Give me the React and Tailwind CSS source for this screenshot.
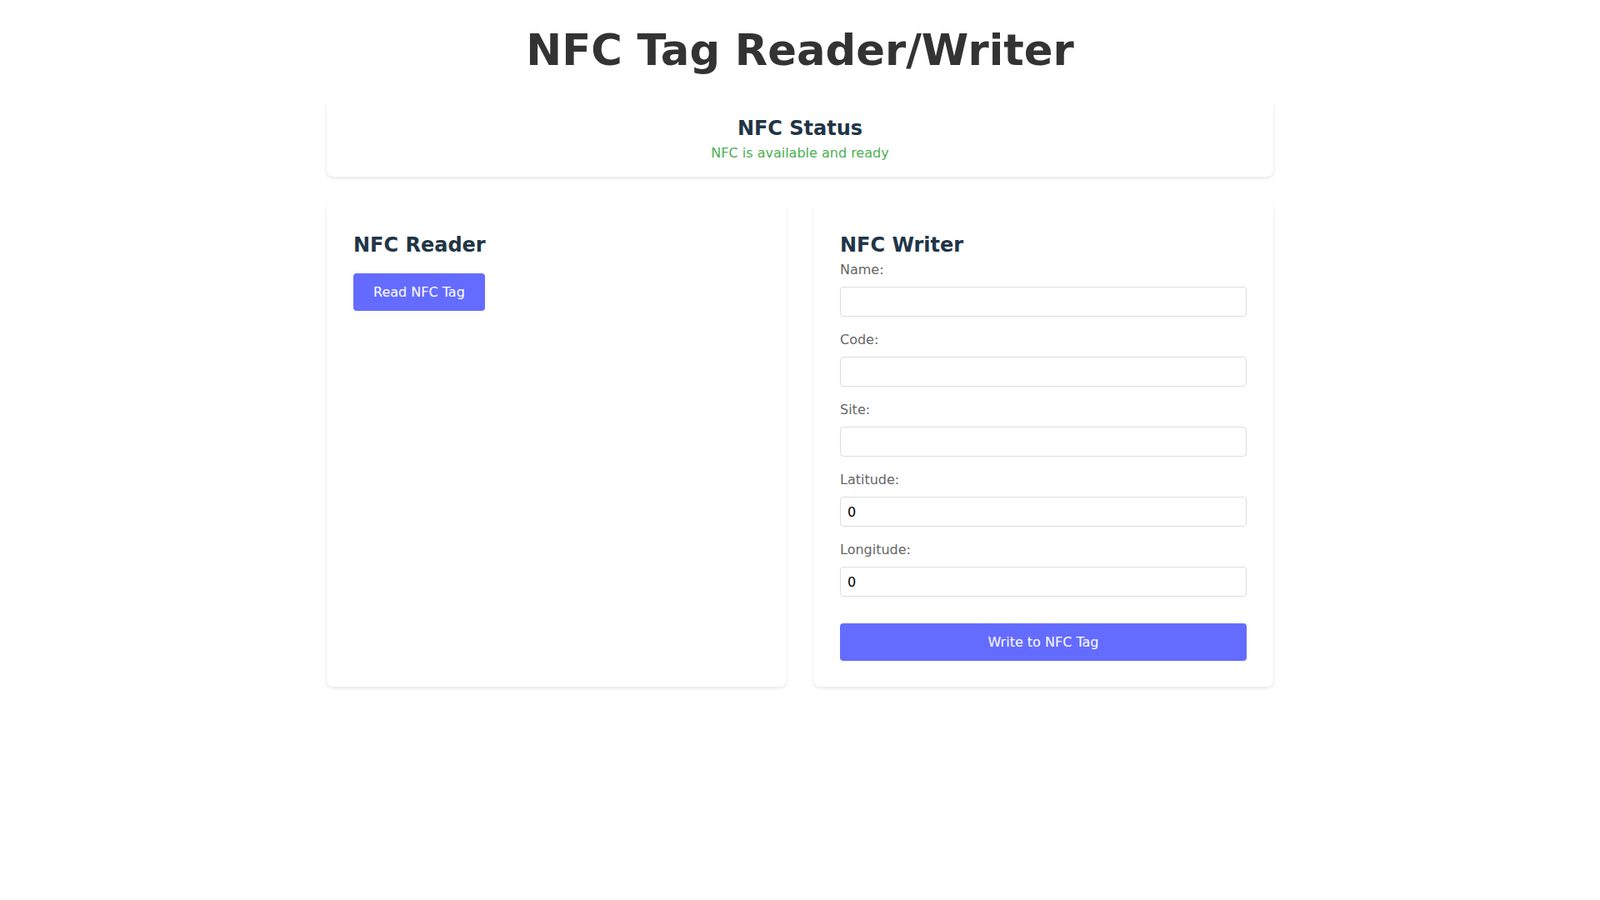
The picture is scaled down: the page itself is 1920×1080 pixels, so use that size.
import React, { useState } from 'react';

const FIELDS = [
  { key: 'name', label: 'Name:', type: 'text' },
  { key: 'code', label: 'Code:', type: 'text' },
  { key: 'site', label: 'Site:', type: 'text' },
  { key: 'latitude', label: 'Latitude:', type: 'number' },
  { key: 'longitude', label: 'Longitude:', type: 'number' },
];

export default function App() {
  const [form, setForm] = useState({ name: '', code: '', site: '', latitude: 0, longitude: 0 });
  const set = (k) => (e) => setForm({ ...form, [k]: e.target.value });

  return (
    <div className="min-h-screen bg-white font-['DejaVu_Sans',sans-serif]">
      <div className="max-w-[1200px] mx-auto px-8">
        <h1 className="text-center text-[51.2px] leading-[56px] font-bold text-[#333] pt-[32px] mb-[32px]">NFC Tag Reader/Writer</h1>

        <div className="bg-white rounded-lg shadow-[0_2px_4px_rgba(0,0,0,0.1)] p-4 text-center mb-8">
          <h2 className="text-2xl leading-9 font-bold text-[#213547]">NFC Status</h2>
          <p className="text-base leading-6 text-[#4caf50]">NFC is available and ready</p>
        </div>

        <div className="grid grid-cols-2 gap-8">
          <div className="bg-white rounded-lg shadow-[0_2px_4px_rgba(0,0,0,0.1)] p-8">
            <h2 className="text-2xl leading-9 font-bold text-[#213547] mb-4">NFC Reader</h2>
            <button className="bg-[#646cff] text-white text-base leading-[21px] px-6 py-3 rounded">Read NFC Tag</button>
          </div>

          <div className="bg-white rounded-lg shadow-[0_2px_4px_rgba(0,0,0,0.1)] px-8 pt-8 pb-[31px]">
            <h2 className="text-2xl leading-9 font-bold text-[#213547]">NFC Writer</h2>
            {FIELDS.map((f) => (
              <div key={f.key} className="mb-4">
                <label className="block text-base leading-6 text-[#666] mb-2">{f.label}</label>
                <input
                  type={f.type}
                  value={form[f.key]}
                  onChange={set(f.key)}
                  className="block w-full h-9 px-2 text-base text-black border border-[#ddd] rounded bg-white outline-none"
                />
              </div>
            ))}
            <button className="w-full mt-4 bg-[#646cff] text-white text-base leading-[21px] py-3 rounded">Write to NFC Tag</button>
          </div>
        </div>
      </div>
    </div>
  );
}
